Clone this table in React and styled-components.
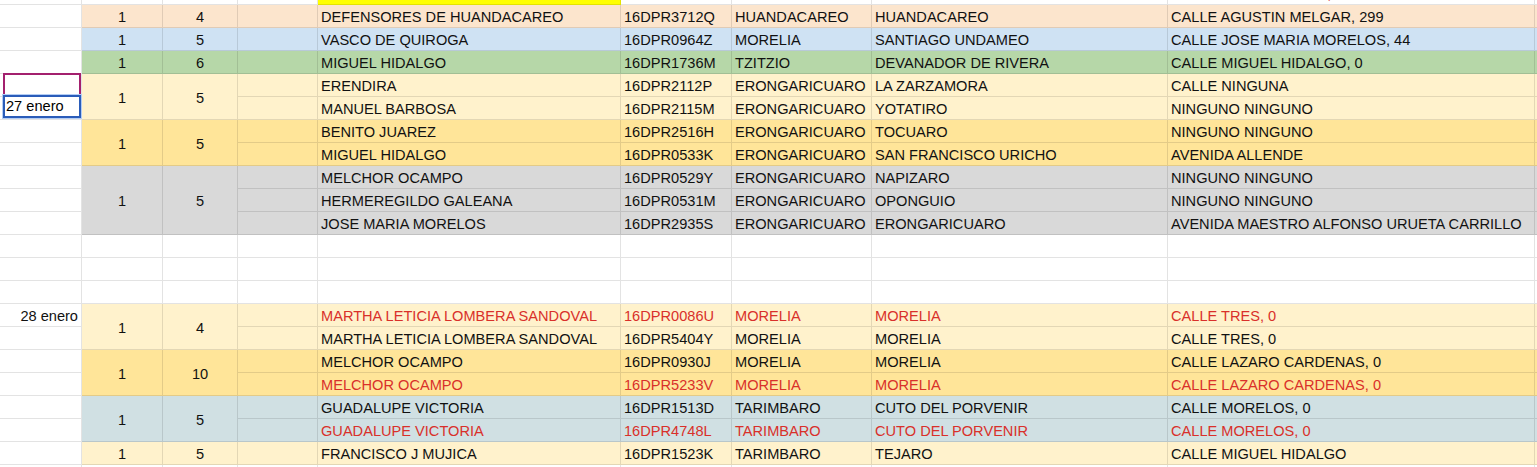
import styled, { createGlobalStyle, css } from "styled-components";

const GlobalStyle = createGlobalStyle`
  html, body {
    margin: 0;
    background: #fff;
    overflow: hidden;
  }
  body {
    font-family: "Liberation Sans", Arial, sans-serif;
  }
`;

const GRIDLINE = "rgba(0, 0, 0, 0.11)";
const RED = "#d9302a";

const Sheet = styled.div`
  display: grid;
  grid-template-columns: 3px 79px 81px 75px 80px 303px 111px 140px 296px 367px 1fr;
  grid-auto-rows: 23px;
  margin-top: -18px;
  font-size: 14.6px;
  line-height: 17px;
  color: #111;
`;

const Cell = styled.div`
  position: relative;
  box-sizing: border-box;
  display: flex;
  align-items: flex-end;
  justify-content: ${(p) => (p.$align === "right" ? "flex-end" : "flex-start")};
  padding: 0 3px 1px;
  border-right: 1px solid ${GRIDLINE};
  border-bottom: 1px solid ${GRIDLINE};
  background: ${(p) => p.$bg || "#fff"};
  color: ${(p) => (p.$red ? RED : "inherit")};
  white-space: nowrap;
  overflow: ${(p) => (p.$free ? "visible" : "hidden")};

  ${(p) =>
    p.$span > 1 &&
    css`
      grid-row: span ${p.$span};
    `}
`;

const NumCell = styled(Cell)`
  align-items: center;
  justify-content: center;
  padding: 3px 0 0;
`;

const PeerCursor = styled.div`
  position: absolute;
  top: -1px;
  left: 0;
  right: 0;
  bottom: -1px;
  border: 2px solid #a3206e;
  z-index: 2;
`;

const EditBox = styled.div`
  position: absolute;
  top: -2px;
  left: 0;
  right: 0;
  bottom: 1px;
  z-index: 3;
  box-sizing: border-box;
  display: flex;
  align-items: center;
  padding: 0 1px;
  background: #fff;
  border: 2px solid #2a5cb9;
  box-shadow: 0 0 0 1px #b3cdf5;
  color: #000;
`;

const blocks = [
  {
    bg: "#fff",
    rows: [{ cells: ["", "", "", "", "CALLE JUSTO SIERRA, 0"], red: true, hiBg: "#ffff00" }],
  },
  {
    bg: "#fce5cd",
    a: 1,
    b: 4,
    rows: [{ cells: ["DEFENSORES DE HUANDACAREO", "16DPR3712Q", "HUANDACAREO", "HUANDACAREO", "CALLE AGUSTIN MELGAR, 299"] }],
  },
  {
    bg: "#cfe2f3",
    a: 1,
    b: 5,
    rows: [{ cells: ["VASCO DE QUIROGA", "16DPR0964Z", "MORELIA", "SANTIAGO UNDAMEO", "CALLE JOSE MARIA MORELOS, 44"] }],
  },
  {
    bg: "#b6d7a8",
    a: 1,
    b: 6,
    rows: [{ cells: ["MIGUEL HIDALGO", "16DPR1736M", "TZITZIO", "DEVANADOR DE RIVERA", "CALLE MIGUEL HIDALGO, 0"] }],
  },
  {
    bg: "#fff2cc",
    a: 1,
    b: 5,
    rows: [
      { side: "peer", cells: ["ERENDIRA", "16DPR2112P", "ERONGARICUARO", "LA ZARZAMORA", "CALLE NINGUNA"] },
      { side: "edit", cells: ["MANUEL BARBOSA", "16DPR2115M", "ERONGARICUARO", "YOTATIRO", "NINGUNO NINGUNO"] },
    ],
  },
  {
    bg: "#ffe599",
    a: 1,
    b: 5,
    rows: [
      { cells: ["BENITO JUAREZ", "16DPR2516H", "ERONGARICUARO", "TOCUARO", "NINGUNO NINGUNO"] },
      { cells: ["MIGUEL HIDALGO", "16DPR0533K", "ERONGARICUARO", "SAN FRANCISCO URICHO", "AVENIDA ALLENDE"] },
    ],
  },
  {
    bg: "#d9d9d9",
    a: 1,
    b: 5,
    rows: [
      { cells: ["MELCHOR OCAMPO", "16DPR0529Y", "ERONGARICUARO", "NAPIZARO", "NINGUNO NINGUNO"] },
      { cells: ["HERMEREGILDO GALEANA", "16DPR0531M", "ERONGARICUARO", "OPONGUIO", "NINGUNO NINGUNO"] },
      { cells: ["JOSE MARIA MORELOS", "16DPR2935S", "ERONGARICUARO", "ERONGARICUARO", "AVENIDA MAESTRO ALFONSO URUETA CARRILLO"] },
    ],
  },
  { bg: "#fff", rows: [{ cells: ["", "", "", "", ""] }] },
  { bg: "#fff", rows: [{ cells: ["", "", "", "", ""] }] },
  { bg: "#fff", rows: [{ cells: ["", "", "", "", ""] }] },
  {
    bg: "#fff2cc",
    a: 1,
    b: 4,
    rows: [
      { side: "28 enero", red: true, cells: ["MARTHA LETICIA LOMBERA SANDOVAL", "16DPR0086U", "MORELIA", "MORELIA", "CALLE TRES, 0"] },
      { cells: ["MARTHA LETICIA LOMBERA SANDOVAL", "16DPR5404Y", "MORELIA", "MORELIA", "CALLE TRES, 0"] },
    ],
  },
  {
    bg: "#ffe599",
    a: 1,
    b: 10,
    rows: [
      { cells: ["MELCHOR OCAMPO", "16DPR0930J", "MORELIA", "MORELIA", "CALLE LAZARO CARDENAS, 0"] },
      { red: true, cells: ["MELCHOR OCAMPO", "16DPR5233V", "MORELIA", "MORELIA", "CALLE LAZARO CARDENAS, 0"] },
    ],
  },
  {
    bg: "#d0e0e3",
    a: 1,
    b: 5,
    rows: [
      { cells: ["GUADALUPE VICTORIA", "16DPR1513D", "TARIMBARO", "CUTO DEL PORVENIR", "CALLE MORELOS, 0"] },
      { red: true, cells: ["GUADALUPE VICTORIA", "16DPR4748L", "TARIMBARO", "CUTO DEL PORVENIR", "CALLE MORELOS, 0"] },
    ],
  },
  {
    bg: "#fff2cc",
    a: 1,
    b: 5,
    rows: [{ cells: ["FRANCISCO J MUJICA", "16DPR1523K", "TARIMBARO", "TEJARO", "CALLE MIGUEL HIDALGO"] }],
  },
  { bg: "#fff", rows: [{ cells: ["", "", "", "", ""] }] },
];

function SideCell({ side }) {
  if (side === "peer") {
    return (
      <Cell $free>
        <PeerCursor />
      </Cell>
    );
  }
  if (side === "edit") {
    return (
      <Cell $free>
        <EditBox>27 enero</EditBox>
      </Cell>
    );
  }
  return <Cell $align="right">{side || ""}</Cell>;
}

function Block({ block }) {
  const n = block.rows.length;
  return block.rows.map((row, i) => (
    <Row key={i} row={row} bg={block.bg}>
      {i === 0 && (
        <>
          <NumCell $bg={block.bg} $span={n}>
            {block.a}
          </NumCell>
          <NumCell $bg={block.bg} $span={n}>
            {block.b}
          </NumCell>
        </>
      )}
    </Row>
  ));
}

function Row({ row, bg, children }) {
  const [name, cct, municipio, localidad, domicilio] = row.cells;
  return (
    <>
      <Cell />
      <SideCell side={row.side} />
      {children}
      <Cell $bg={bg} />
      <Cell $bg={row.hiBg || bg} $red={row.red}>{name}</Cell>
      <Cell $bg={bg} $red={row.red}>{cct}</Cell>
      <Cell $bg={bg} $red={row.red}>{municipio}</Cell>
      <Cell $bg={bg} $red={row.red}>{localidad}</Cell>
      <Cell $bg={bg} $red={row.red}>{domicilio}</Cell>
      <Cell $bg={bg} />
    </>
  );
}

export default function App() {
  return (
    <>
      <GlobalStyle />
      <Sheet>
        {blocks.map((block, i) => (
          <Block key={i} block={block} />
        ))}
      </Sheet>
    </>
  );
}
